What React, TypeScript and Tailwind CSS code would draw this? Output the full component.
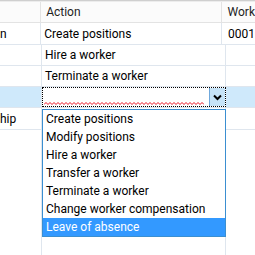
import React from "react";

const rows = [
  { c1: "n", c2: "Create positions", c3: "0001", h: "h-[22px]" },
  { c1: "", c2: "Hire a worker", c3: "", h: "h-[21px]" },
  { c1: "", c2: "Terminate a worker", c3: "", h: "h-[21px]" },
];

const items = [
  "Create positions",
  "Modify positions",
  "Hire a worker",
  "Transfer a worker",
  "Terminate a worker",
  "Change worker compensation",
  "Leave of absence",
];

export default function App() {
  return (
    <div className="relative w-[255px] h-[255px] overflow-hidden bg-white font-['Roboto','Noto_Sans',sans-serif] text-[12px] text-black flex flex-col">
      <div className="h-[1px] bg-[#cfcfcf] shrink-0" />
      <div className="h-[1px] bg-[#ececec] shrink-0" />
      {/* header */}
      <div className="flex h-[21px] shrink-0 bg-[#fbfbfb] border-b border-[#e3e3e3] text-[#1e1e1e]">
        <div className="w-[42px] border-r border-[#e3e3e3]" />
        <div className="w-[184px] border-r border-[#e3e3e3] pl-[5px] flex items-center">Action</div>
        <div className="flex-1 pl-[6px] flex items-center whitespace-nowrap">Work</div>
      </div>
      {rows.map((r, i) => (
        <div key={i} className={`flex ${r.h} shrink-0 border-b border-[#dfe6ee]`}>
          <div className="w-[42px] border-r border-[#dfe6ee] flex items-center">{r.c1}</div>
          <div className="w-[184px] border-r border-[#dfe6ee] pl-[3px] flex items-center whitespace-nowrap">{r.c2}</div>
          <div className="flex-1 pl-[6px] flex items-center whitespace-nowrap">{r.c3}</div>
        </div>
      ))}
      {/* selected row */}
      <div className="flex h-[21px] shrink-0 border-b border-[#dfe6ee]">
        <div className="w-[42px] bg-[#cfe9fb] border-r border-[#dfe6ee]" />
        <div className="w-[184px] flex">
          <div className="flex-1 relative border border-dotted border-black bg-white flex">
            <div className="flex-1 relative">
              <svg className="absolute left-[1px] top-[14px]" width="160" height="3" viewBox="0 0 160 3">
                <polyline
                  fill="none"
                  stroke="#e81123"
                  strokeWidth="1"
                  points={Array.from({ length: 81 }, (_, k) => `${k * 2},${k % 2 === 0 ? 2.5 : 0.5}`).join(" ")}
                />
              </svg>
            </div>
            <div className="w-[16px] bg-[#c6e3f7] border-l border-[#6fa8dc] flex items-center justify-center">
              <svg width="9" height="7" viewBox="0 0 9 7">
                <path d="M1 1.5 L4.5 5 L8 1.5" fill="none" stroke="#000" strokeWidth="2" />
              </svg>
            </div>
          </div>
        </div>
        <div className="flex-1 bg-[#cfe9fb]" />
      </div>
      {/* row 5 */}
      <div className="flex h-[22px] shrink-0 border-b border-[#dfe6ee]">
        <div className="w-[42px] border-r border-[#dfe6ee] flex items-center">hip</div>
        <div className="w-[184px] border-r border-[#dfe6ee]" />
        <div className="flex-1" />
      </div>
      <div className="flex flex-1">
        <div className="w-[42px] border-r border-[#dfe6ee]" />
        <div className="w-[184px] border-r border-[#dfe6ee]" />
        <div className="flex-1" />
      </div>
      {/* dropdown list */}
      <div className="absolute left-[42px] top-[109px] w-[184px] border border-[#3b8fd1] bg-white flex flex-col">
        {items.map((t, i) => (
          <div
            key={t}
            className={`h-[18px] pl-[3px] flex items-center whitespace-nowrap ${
              i === items.length - 1 ? "bg-[#3399ff] text-white" : ""
            }`}
          >
            {t}
          </div>
        ))}
      </div>
    </div>
  );
}
